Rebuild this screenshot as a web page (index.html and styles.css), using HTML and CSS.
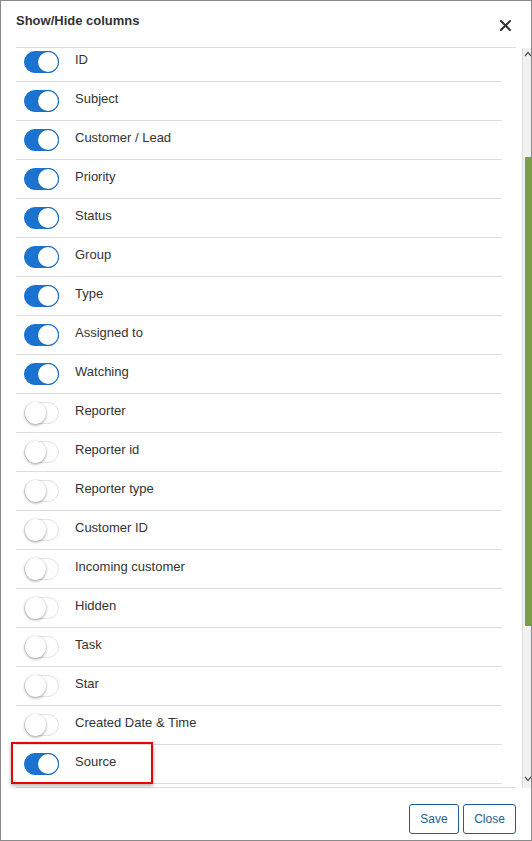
FILE: index.html
```html
<!DOCTYPE html>
<html>
<head>
<meta charset="utf-8">
<link rel="stylesheet" href="styles.css">
</head>
<body>
<div class="dialog">
  <div class="header">
    <div class="title">Show/Hide columns</div>
    <button class="close-x" aria-label="Close">
      <svg width="11" height="11" viewBox="0 0 11 11"><path d="M1 1 L10 10 M10 1 L1 10" stroke="#333" stroke-width="2" stroke-linecap="square"/></svg>
    </button>
  </div>
  <div class="body">
    <div class="list">
      <div class="rows">
        <div class="row"><span class="toggle on"></span><span class="label">ID</span></div>
        <div class="row"><span class="toggle on"></span><span class="label">Subject</span></div>
        <div class="row"><span class="toggle on"></span><span class="label">Customer / Lead</span></div>
        <div class="row"><span class="toggle on"></span><span class="label">Priority</span></div>
        <div class="row"><span class="toggle on"></span><span class="label">Status</span></div>
        <div class="row"><span class="toggle on"></span><span class="label">Group</span></div>
        <div class="row"><span class="toggle on"></span><span class="label">Type</span></div>
        <div class="row"><span class="toggle on"></span><span class="label">Assigned to</span></div>
        <div class="row"><span class="toggle on"></span><span class="label">Watching</span></div>
        <div class="row"><span class="toggle"></span><span class="label">Reporter</span></div>
        <div class="row"><span class="toggle"></span><span class="label">Reporter id</span></div>
        <div class="row"><span class="toggle"></span><span class="label">Reporter type</span></div>
        <div class="row"><span class="toggle"></span><span class="label">Customer ID</span></div>
        <div class="row"><span class="toggle"></span><span class="label">Incoming customer</span></div>
        <div class="row"><span class="toggle"></span><span class="label">Hidden</span></div>
        <div class="row"><span class="toggle"></span><span class="label">Task</span></div>
        <div class="row"><span class="toggle"></span><span class="label">Star</span></div>
        <div class="row"><span class="toggle"></span><span class="label">Created Date &amp; Time</span></div>
        <div class="row"><span class="toggle on"></span><span class="label">Source</span></div>
      </div>
    </div>
    <div class="scrollbar">
      <svg class="arrow" width="8" height="6" viewBox="0 0 8 6"><path d="M1 5 L4 1.5 L7 5" fill="none" stroke="#555" stroke-width="1.2"/></svg>
      <div class="thumb-space-top"></div>
      <div class="thumb"></div>
      <div class="thumb-space-bottom"></div>
      <svg class="arrow" width="8" height="6" viewBox="0 0 8 6"><path d="M1 1 L4 4.5 L7 1" fill="none" stroke="#555" stroke-width="1.2"/></svg>
    </div>
  </div>
  <div class="footer">
    <button class="btn btn-save">Save</button>
    <button class="btn btn-close">Close</button>
  </div>
  <div class="highlight"></div>
</div>
</body>
</html>
```

FILE: styles.css
```css
* { box-sizing: border-box; }
html, body { margin: 0; padding: 0; background: #fff; }
body { font-family: "Liberation Sans", Arial, sans-serif; color: #333; }

.dialog {
  position: relative;
  width: 532px;
  height: 841px;
  border: 1px solid #8a8a8a;
  background: #fff;
}

.header {
  display: flex;
  justify-content: space-between;
  align-items: flex-start;
  height: 46px;
  padding: 12px 20px 0 15px;
}
.title {
  font-size: 13px;
  font-weight: bold;
  line-height: 15px;
  color: #333;
}
.close-x {
  border: 0;
  background: none;
  padding: 0;
  margin-top: 7px;
  width: 11px;
  height: 11px;
  display: block;
}
.close-x svg { display: block; }

.body {
  display: flex;
  align-items: flex-start;
  padding-left: 15px;
}
.list {
  width: 500px;
  height: 741px;
  border-top: 1px solid #ddd;
  border-bottom: 1px solid #ddd;
  overflow: hidden;
}
.rows { margin-top: -5px; }
.row {
  display: flex;
  align-items: flex-start;
  width: 486px;
  height: 39px;
  border-bottom: 1px solid #ddd;
}
.toggle {
  position: relative;
  flex: none;
  width: 35px;
  height: 22px;
  margin: 8px 0 0 8px;
  border-radius: 11px;
  background: #fff;
  border: 1px solid #e3e3e3;
}
.toggle::after {
  content: "";
  position: absolute;
  top: -1px;
  left: 0;
  width: 21px;
  height: 22px;
  border-radius: 50%;
  background: #fff;
  box-shadow: 0 1px 3px rgba(0,0,0,0.4);
}
.toggle.on {
  background: #1a73d0;
  border-color: #1a73d0;
}
.toggle.on::after {
  top: 0;
  left: 13px;
  width: 20px;
  height: 20px;
  box-shadow: 0 0 0 1px #1a6cc0;
}
.label {
  font-size: 13px;
  line-height: 15px;
  padding: 9px 0 0 16px;
  color: #333;
}

.scrollbar {
  display: flex;
  flex-direction: column;
  align-items: center;
  width: 9px;
  height: 740px;
  margin-left: 6px;
  margin-top: 1px;
  background: #f1f1f1;
  border-left: 1px solid #dcdcdc;
}
.arrow { flex: none; display: block; margin-top: 3px; margin-left: 2px; }
.scrollbar .arrow:last-child { margin-top: 0; margin-bottom: 6px; }
.thumb-space-top { height: 100px; flex: none; }
.thumb {
  flex: none;
  width: 7px;
  margin-left: 2px;
  height: 469px;
  background: #7a9e45;
}
.thumb-space-bottom { flex: 1; }

.footer {
  display: flex;
  justify-content: flex-end;
  gap: 4px;
  padding: 16px 15px 0 0;
}
.btn {
  font-family: "Liberation Sans", Arial, sans-serif;
  font-size: 12px;
  color: #1f5c99;
  background: #fff;
  border: 1px solid #1f5c99;
  border-radius: 3px;
  height: 30px;
  padding: 0;
  text-align: center;
}
.btn-save { width: 50px; }
.btn-close { width: 53px; }

.highlight {
  position: absolute;
  left: 10px;
  top: 741px;
  width: 142px;
  height: 42px;
  border: 2px solid #ee0000;
  box-shadow: 0 2px 4px rgba(0,0,0,0.3);
}
```
